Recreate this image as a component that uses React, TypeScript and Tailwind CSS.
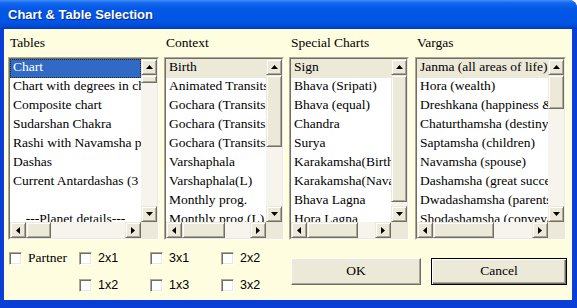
const serif = "font-['Liberation_Serif',serif]"
const sans = "font-['Liberation_Sans',Arial,sans-serif]"

// classic 3D edges with XP colours
const raised =
  "bg-[#ece9d8] border border-t-[#ece9d8] border-l-[#ece9d8] border-b-[#716f64] border-r-[#716f64] shadow-[inset_1px_1px_0_#fff,inset_-1px_-1px_0_#aca899]"

function Arrow({ dir }: { dir: "up" | "down" | "left" | "right" }) {
  if (dir === "up")
    return (
      <svg width="7" height="4" viewBox="0 0 7 4">
        <polygon points="0,4 7,4 3.5,0" fill="#000" />
      </svg>
    )
  if (dir === "down")
    return (
      <svg width="7" height="4" viewBox="0 0 7 4">
        <polygon points="0,0 7,0 3.5,4" fill="#000" />
      </svg>
    )
  if (dir === "left")
    return (
      <svg width="4" height="7" viewBox="0 0 4 7">
        <polygon points="4,0 4,7 0,3.5" fill="#000" />
      </svg>
    )
  return (
    <svg width="4" height="7" viewBox="0 0 4 7">
      <polygon points="0,0 0,7 4,3.5" fill="#000" />
    </svg>
  )
}

function ScrollBtn({ dir }: { dir: "up" | "down" | "left" | "right" }) {
  return (
    <div className={`w-[16px] h-[16px] shrink-0 flex items-center justify-center ${raised}`}>
      <Arrow dir={dir} />
    </div>
  )
}

type ListProps = {
  label: string
  width: string
  items: string[]
  focused?: boolean
  vThumb: string
  hThumb: string
  centerLast?: boolean
  className?: string
}

function ListBox({ label, width, items, focused, vThumb, hThumb, centerLast, className = "" }: ListProps) {
  return (
    <div className={`flex flex-col ${width} ${className}`}>
      <div className="h-[15px] leading-[15px] pl-[2px] text-[13.5px] text-black whitespace-nowrap">{label}</div>
      <div className="mt-[7px] h-[183px] border border-t-[#aca899] border-l-[#aca899] border-b-white border-r-white">
        <div className="h-full flex flex-col bg-white border border-t-[#716f64] border-l-[#716f64] border-b-[#ece9d8] border-r-[#ece9d8]">
          <div className="flex h-[163px]">
            <div className="flex-1 overflow-hidden">
              {items.map((item, i) => {
                const isSel = i === 0
                const isLast = centerLast && i === items.length - 1
                let rowCls = "text-black"
                if (isSel && focused)
                  rowCls = "bg-[#316ac5] text-white outline-1 outline-dotted outline-offset-[-1px] outline-[#222]"
                else if (isSel) rowCls = "bg-[#ece9d8] text-black"
                return (
                  <div
                    key={i}
                    className={`h-[19px] leading-[15px] text-[13.5px] whitespace-nowrap ${isLast ? "text-center" : "pl-[3px]"} ${rowCls}`}
                  >
                    {item}
                  </div>
                )
              })}
            </div>
            <div className="w-[16px] flex flex-col">
              <ScrollBtn dir="up" />
              <div className={`${vThumb} shrink-0 ${raised}`} />
              <div className="flex-1 bg-[#f6f4ec]" />
              <ScrollBtn dir="down" />
            </div>
          </div>
          <div className="flex h-[16px]">
            <ScrollBtn dir="left" />
            <div className={`${hThumb} shrink-0 ${raised}`} />
            <div className="flex-1 bg-[#f6f4ec]" />
            <ScrollBtn dir="right" />
            <div className="w-[16px] bg-[#ece9d8]" />
          </div>
        </div>
      </div>
    </div>
  )
}

function Check({ label, font }: { label: string; font: string }) {
  return (
    <div className="flex items-center h-[13px]">
      <div className="w-[13px] h-[13px] shrink-0 bg-white border border-t-[#aca899] border-l-[#aca899] border-b-white border-r-white shadow-[inset_1px_1px_0_#716f64,inset_-1px_-1px_0_#ece9d8]" />
      <span className={`ml-[6px] text-black whitespace-nowrap ${font}`}>{label}</span>
    </div>
  )
}

const tables = [
  "Chart",
  "Chart with degrees in chart",
  "Composite chart",
  "Sudarshan Chakra",
  "Rashi with Navamsha positions",
  "Dashas",
  "Current Antardashas (3 levels)",
  "",
  "---Planet details---",
]

const context = [
  "Birth",
  "Animated Transits",
  "Gochara (Transits)",
  "Gochara (Transits)",
  "Gochara (Transits)",
  "Varshaphala",
  "Varshaphala(L)",
  "Monthly prog.",
  "Monthly prog.(L)",
]

const special = [
  "Sign",
  "Bhava (Sripati)",
  "Bhava (equal)",
  "Chandra",
  "Surya",
  "Karakamsha(Birth)",
  "Karakamsha(Navamsha)",
  "Bhava Lagna",
  "Hora Lagna",
]

const vargas = [
  "Janma (all areas of life)",
  "Hora (wealth)",
  "Dreshkana (happiness & siblings)",
  "Chaturthamsha (destiny)",
  "Saptamsha (children)",
  "Navamsha (spouse)",
  "Dashamsha (great success)",
  "Dwadashamsha (parents)",
  "Shodashamsha (conveyances)",
]

export default function App() {
  return (
    <div className="w-[577px] h-[308px] bg-white overflow-hidden">
      <div className="w-[577px] h-[308px] flex flex-col bg-[#0a3ed6] rounded-tr-[8px] overflow-hidden">
        <div className="h-[29px] shrink-0 flex items-center pl-[8px] bg-[linear-gradient(to_bottom,#3f91f8_0%,#1467ee_10%,#0458e6_30%,#0055e4_75%,#0049d6_92%,#0038b8_100%)]">
          <span className={`${sans} text-[13px] font-bold text-white [text-shadow:1px_1px_0_#0b2a8a] pt-[1px]`}>
            Chart &amp; Table Selection
          </span>
        </div>
        <div className={`flex-1 ml-[4px] mr-[5px] mb-[8px] bg-[#fffde0] ${serif} flex flex-col`}>
          <div className="flex pt-[6px] pl-[4px]">
            <ListBox label="Tables" width="w-[151px]" items={tables} focused vThumb="h-[8px]" hThumb="w-[25px]" centerLast />
            <ListBox label="Context" width="w-[120px]" className="ml-[5px]" items={context} vThumb="h-[72px]" hThumb="w-[43px]" />
            <ListBox label="Special Charts" width="w-[120px]" className="ml-[5px]" items={special} vThumb="h-[127px]" hThumb="w-[51px]" />
            <ListBox label="Vargas" width="w-[151px]" className="ml-[6px]" items={vargas} vThumb="h-[34px]" hThumb="w-[61px]" />
          </div>
          <div className="flex mt-[12px] pl-[5px]">
            <div className="w-[282px] grid grid-cols-[70px_71px_71px_70px] gap-y-[14px] text-[13px]">
              <Check label="Partner" font={`${serif} text-[13.5px]`} />
              <Check label="2x1" font={`${sans} text-[12.5px]`} />
              <Check label="3x1" font={`${sans} text-[12.5px]`} />
              <Check label="2x2" font={`${sans} text-[12.5px]`} />
              <div />
              <Check label="1x2" font={`${sans} text-[12.5px]`} />
              <Check label="1x3" font={`${sans} text-[12.5px]`} />
              <Check label="3x2" font={`${sans} text-[12.5px]`} />
            </div>
            <div className="flex mt-[6px]">
              <button className="w-[130px] h-[27px] bg-[#ece9d8] border border-t-white border-l-white border-b-[#716f64] border-r-[#716f64] shadow-[inset_-1px_-1px_0_#aca899] text-[13.5px] text-black">
                OK
              </button>
              <button className="ml-[10px] w-[136px] h-[27px] bg-[#ece9d8] border border-black shadow-[inset_1px_1px_0_#fff,inset_-1px_-1px_0_#716f64,inset_-2px_-2px_0_#aca899] text-[13.5px] text-black">
                Cancel
              </button>
            </div>
          </div>
        </div>
      </div>
    </div>
  )
}
